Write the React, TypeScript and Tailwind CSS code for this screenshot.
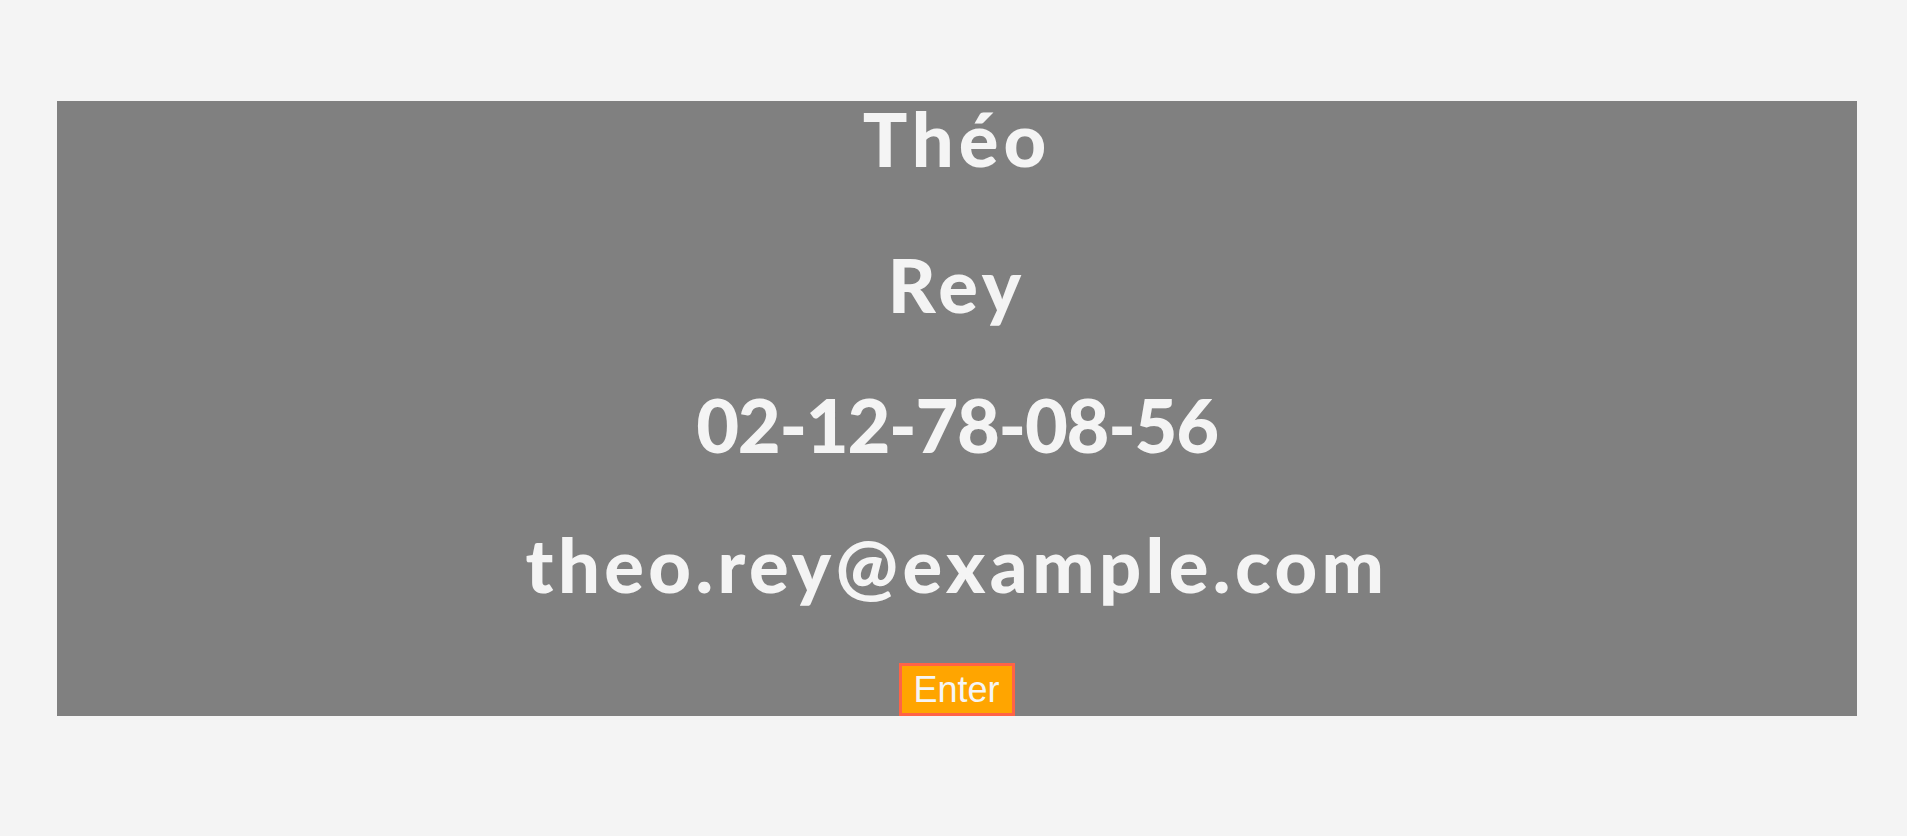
const contact = {
  firstName: "Théo",
  lastName: "Rey",
  phone: "02-12-78-08-56",
  email: "theo.rey@example.com",
};

export default function App() {
  return (
    <div className="min-h-screen w-full bg-[#f4f4f4] pt-[101px]">
      {/* Contact card */}
      <div
        className="ml-[57px] flex h-[615px] w-[1800px] flex-col items-center bg-[#808080] text-[#f4f4f4]"
        style={{ fontFamily: "Lato, 'Open Sans', sans-serif" }}
      >
        <h1 className="text-[74px] font-black leading-[76px] tracking-[5px]">{contact.firstName}</h1>
        <h1 className="mt-[74px] text-[74px] font-black leading-[68px] tracking-[5px]">{contact.lastName}</h1>
        <h1 className="mt-[72px] text-[74px] font-black leading-[68px] tracking-[-1.3px]">{contact.phone}</h1>
        <h1 className="mt-[72px] text-[74px] font-black leading-[68px] tracking-[4.4px]">{contact.email}</h1>

        <button
          type="button"
          className="mt-[64px] border-[3px] border-[#ff6347] bg-[#ffa500] py-[3px] pl-[11px] pr-[12px] text-[36px] leading-[41px] text-[#f5f5f5]"
          style={{ fontFamily: "'Liberation Sans', Arial, sans-serif" }}
        >
          Enter
        </button>
      </div>
    </div>
  );
}
